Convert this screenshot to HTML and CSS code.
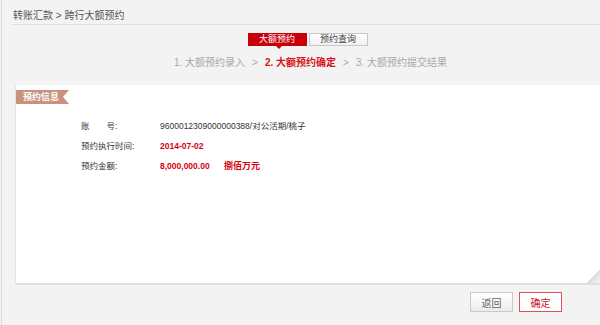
FILE: index.html
```html
<!DOCTYPE html>
<html>

<head>
    <title>跨行大额预约</title>
    <link rel="stylesheet" href="styles.css">
</head>

<body>
    <div class="page">
        <div class="crumb">转账汇款 &gt; 跨行大额预约</div>

        <div class="main">
            <div class="tabs">
                <a class="tab active">大额预约</a>
                <a class="tab">预约查询</a>
            </div>

            <div class="steps">
                <span>1. 大额预约录入</span>
                <span class="sep">&gt;</span>
                <span class="current">2. 大额预约确定</span>
                <span class="sep">&gt;</span>
                <span>3. 大额预约提交结果</span>
            </div>

            <div class="panel">
                <div class="badge">预约信息</div>
                <div class="rows">
                    <div class="row">
                        <div class="label">账&emsp;&emsp;号:</div>
                        <div class="value">9600012309000000388/对公活期/桃子</div>
                    </div>
                    <div class="row">
                        <div class="label">预约执行时间:</div>
                        <div class="value red">2014-07-02</div>
                    </div>
                    <div class="row">
                        <div class="label">预约金额:</div>
                        <div class="value red">8,000,000.00</div>
                        <div class="words">捌佰万元</div>
                    </div>
                </div>
                <div class="fold"></div>
            </div>

            <div class="actions">
                <button class="btn">返回</button>
                <button class="btn primary">确定</button>
            </div>
        </div>
    </div>
</body>

</html>
```

FILE: styles.css
```css
body {
    margin: 0;
    background-color: #f3f3f3;
    font-family: "Liberation Sans", "Noto Sans CJK SC", sans-serif;
}

.page {
    min-height: 325px;
    margin-left: 1px;
    border-left: 1px dotted #c4c4c4;
    box-sizing: border-box;
}

.crumb {
    margin-left: 11px;
    padding-top: 10px;
    height: 14px;
    line-height: 12px;
    font-size: 10px;
    color: #555;
    border-bottom: 1px dotted #cfcfcf;
}

.main {
    margin-left: 13px;
}

.tabs {
    display: flex;
    justify-content: center;
    gap: 2px;
    margin-top: 8px;
}

.tab {
    position: relative;
    width: 57px;
    height: 11px;
    line-height: 11px;
    text-align: center;
    font-size: 9px;
    color: #444;
    background: linear-gradient(#fff, #f1f1f1);
    border: 1px solid #c8c8c8;
}

.tab.active {
    color: #fff;
    background: #c8000a;
    border-color: #c8000a;
}

.tab.active:after {
    content: "";
    position: absolute;
    left: 27px;
    bottom: -4px;
    border-left: 3px solid transparent;
    border-right: 3px solid transparent;
    border-top: 3px solid #c8000a;
}

.steps {
    display: flex;
    justify-content: center;
    gap: 5px;
    margin-top: 11px;
    padding-left: 6px;
    font-size: 10px;
    line-height: 12px;
    color: #a8a8a8;
}

.steps .sep {
    margin: 0 2px;
}

.steps .current {
    color: #d6141b;
    font-weight: bold;
}

.panel {
    position: relative;
    margin-top: 16px;
    height: 200px;
    background-color: #fff;
    border-left: 1px solid #e6e6e6;
    border-bottom: 2px solid #e0e0e0;
    padding-top: 5px;
    box-sizing: border-box;
}

.badge {
    position: relative;
    width: 40px;
    height: 14px;
    line-height: 14px;
    padding-left: 7px;
    font-size: 9px;
    font-weight: bold;
    color: #fff;
    background-color: #c9927c;
}

.badge:after {
    content: "";
    position: absolute;
    right: -6px;
    top: 0;
    border-top: 7px solid #c9927c;
    border-bottom: 7px solid #c9927c;
    border-right: 6px solid transparent;
}

.rows {
    margin-top: 15px;
    padding-left: 65px;
}

.row {
    display: flex;
    height: 20px;
    line-height: 14px;
    font-size: 8.5px;
    color: #333;
    white-space: nowrap;
}

.label {
    width: 79px;
}

.value {
    width: 64px;
}

.value.red,
.words {
    color: #d6000f;
    font-weight: bold;
}

.words {
    font-size: 9px;
}

.fold {
    position: absolute;
    right: 0;
    bottom: 0;
    width: 0;
    height: 0;
    border-left: 13px solid transparent;
    border-bottom: 14px solid #f3f3f3;
}

.fold:before {
    content: "";
    position: absolute;
    left: -13px;
    top: 0;
    width: 13px;
    height: 14px;
    background: linear-gradient(135deg, transparent 50%, #dcdcdc 50%, #f5f5f5 100%);
}

.actions {
    display: flex;
    justify-content: flex-end;
    gap: 6px;
    margin-top: 7px;
    margin-right: 38px;
}

.btn {
    width: 43px;
    height: 20px;
    padding: 0;
    font-family: "Liberation Sans", "Noto Sans CJK SC", sans-serif;
    font-size: 10px;
    color: #666;
    background: linear-gradient(#fff, #ececec);
    border: 1px solid #c9c9c9;
    cursor: pointer;
}

.btn.primary {
    color: #c8101a;
    background: #fff;
    border-color: #d9535a;
}
```
